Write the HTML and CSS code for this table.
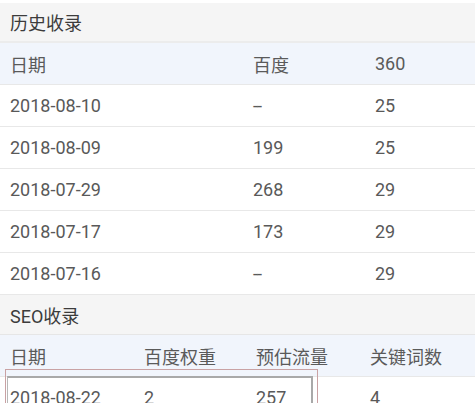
FILE: index.html
```html
<!DOCTYPE html>
<html lang="zh-CN">
<head>
<meta charset="utf-8">
<link rel="stylesheet" href="styles.css">
</head>
<body>
<div class="page">
  <div class="section-title first">历史收录</div>
  <div class="row head cols3"><span>日期</span><span>百度</span><span>360</span></div>
  <div class="row cols3"><span>2018-08-10</span><span class="dash">--</span><span>25</span></div>
  <div class="row cols3"><span>2018-08-09</span><span>199</span><span>25</span></div>
  <div class="row cols3"><span>2018-07-29</span><span>268</span><span>29</span></div>
  <div class="row cols3"><span>2018-07-17</span><span>173</span><span>29</span></div>
  <div class="row cols3"><span>2018-07-16</span><span class="dash">--</span><span>29</span></div>
  <div class="section-title">SEO收录</div>
  <div class="row head cols4"><span>日期</span><span>百度权重</span><span>预估流量</span><span>关键词数</span></div>
  <div class="row cols4 last"><span>2018-08-22</span><span>2</span><span>257</span><span>4</span></div>
  <div class="mark"><div class="mark-inner"></div></div>
</div>
</body>
</html>
```
FILE: styles.css
```css
html, body {
  margin: 0;
  padding: 0;
  background: #ffffff;
}
body {
  font-family: Roboto, "Noto Sans CJK SC", sans-serif;
  font-size: 18px;
  color: #595959;
  overflow: hidden;
}
.page {
  position: relative;
  width: 475px;
  height: 403px;
  overflow: hidden;
  padding-top: 3px;
  box-sizing: border-box;
}
.section-title {
  height: 39px;
  display: flex;
  align-items: center;
  padding-left: 10px;
  background: #f5f5f5;
  color: #3c3c3c;
  border-bottom: 1px solid #e6e6e6;
  font-family: Roboto, "Noto Sans CJK SC", sans-serif;
}
.section-title.first {
  height: 38px;
  border-bottom: 2px solid #ececec;
}
.row {
  height: 41px;
  display: grid;
  align-items: center;
  padding-left: 10px;
  border-bottom: 1px solid #e8e8e8;
  background: #ffffff;
}
.row.head {
  background: #f1f5fc;
  color: #5a5a5a;
}
.cols3 {
  grid-template-columns: 243px 122px 1fr;
}
.cols4 {
  grid-template-columns: 134px 112px 114px 1fr;
}
.dash {
  letter-spacing: -1px;
}
.mark {
  position: absolute;
  left: 5px;
  top: 369px;
  width: 313px;
  height: 80px;
  box-sizing: border-box;
  border: 1px solid #c9a2a4;
  padding: 6px 4px 0 1px;
}
.mark-inner {
  height: 100%;
  border-top: 2px solid #a9a9a9;
  border-left: 1px solid #b8b8b8;
  border-right: 2px solid #a9a9a9;
  box-sizing: border-box;
}
```
